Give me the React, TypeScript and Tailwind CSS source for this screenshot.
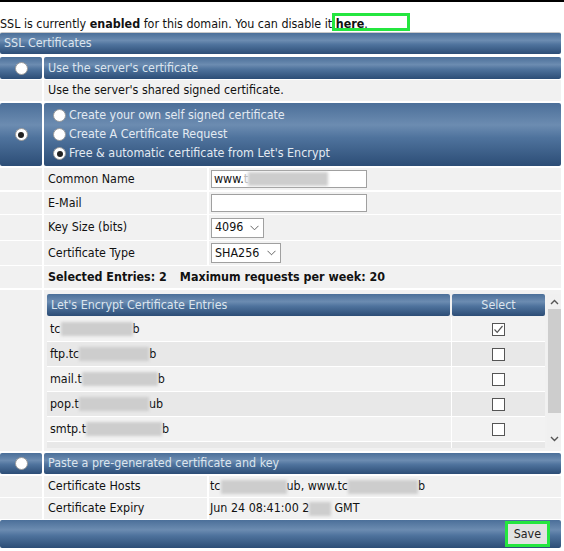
import React from "react";

const grad =
  "bg-[linear-gradient(to_bottom,#4b6f99_0%,#6c8cb1_35%,#4f739d_55%,#2c4d76_100%)]";

function Radio({ checked = false }: { checked?: boolean }) {
  return (
    <span className="inline-flex w-[13px] h-[13px] rounded-full bg-white border border-[#9a9a9a] items-center justify-center shrink-0">
      {checked && <span className="w-[6px] h-[6px] rounded-full bg-[#222]" />}
    </span>
  );
}

function Blur({ w }: { w: number }) {
  return (
    <span
      className="inline-block h-[14px] bg-[#cdcdcd] blur-[1.5px] align-middle"
      style={{ width: w }}
    />
  );
}

function Check({ checked = false }: { checked?: boolean }) {
  return (
    <span className="inline-flex w-[13px] h-[13px] bg-white border border-[#555] items-center justify-center">
      {checked && (
        <svg width="11" height="11" viewBox="0 0 11 11">
          <path d="M1.5 5.5 L4.2 8.3 L9.5 2" fill="none" stroke="#555" strokeWidth="1.2" />
        </svg>
      )}
    </span>
  );
}

function HeadRow({ children, checked }: { children: React.ReactNode; checked?: boolean }) {
  return (
    <div className="flex gap-[2px] h-[22px]">
      <div className={`w-[42px] ${grad} rounded-[2px] flex items-center justify-center`}>
        <Radio checked={checked} />
      </div>
      <div className={`flex-1 ${grad} rounded-[2px] flex items-center pl-[4px] text-[#dce5ee]`}>
        {children}
      </div>
    </div>
  );
}

function FormRow({
  label,
  children,
  h = 22,
  mt = 2,
  pl = 2,
}: {
  label: React.ReactNode;
  children?: React.ReactNode;
  h?: number;
  mt?: number;
  pl?: number;
}) {
  return (
    <div className="flex gap-[2px]" style={{ height: h, marginTop: mt }}>
      <div className="w-[42px] bg-[#f1f1f1]" />
      <div className="w-[163px] bg-[#f1f1f1] flex items-center pl-[4px]">{label}</div>
      <div className="flex-1 bg-[#f1f1f1] flex items-center" style={{ paddingLeft: pl }}>
        {children}
      </div>
    </div>
  );
}

function Select({ value, w }: { value: string; w: number }) {
  return (
    <div
      className="h-[20px] bg-white border border-[#a0a0a0] flex items-center justify-between pl-[3px] pr-[4px]"
      style={{ width: w }}
    >
      <span>{value}</span>
      <svg width="9" height="6" viewBox="0 0 9 6">
        <path d="M0.5 0.8 L4.5 4.8 L8.5 0.8" fill="none" stroke="#666" strokeWidth="1" />
      </svg>
    </div>
  );
}

const entries: { pre: string; blur: number; post: string; checked: boolean }[] = [
  { pre: "tc", blur: 72, post: "b", checked: true },
  { pre: "ftp.tc", blur: 70, post: "b", checked: false },
  { pre: "mail.t", blur: 76, post: "b", checked: false },
  { pre: "pop.t", blur: 70, post: "ub", checked: false },
  { pre: "smtp.t", blur: 76, post: "b", checked: false },
];

export default function App() {
  return (
    <div
      className="w-[564px] h-[551px] bg-white overflow-hidden text-[12.4px] text-[#111] leading-none relative"
      style={{ fontFamily: "'DejaVu Sans Condensed', 'DejaVu Sans', Tahoma, sans-serif" }}
    >
      <div className="h-[2px] bg-black" />
      <div className="h-[30px] flex items-end pb-[2px] relative">
        <span>
          SSL is currently <b>enabled</b> for this domain. You can disable it <b>here</b>.
        </span>
        <span className="absolute left-[332px] top-[11px] w-[78px] h-[18px] border-[3px] border-[#24e63f]" />
      </div>
      <div className="w-[561px] flex flex-col">
        <div className={`h-[22px] ${grad} rounded-[2px] flex items-center pl-[4px] text-[#dce5ee] border-t border-[#c8c8c8]`}>
          SSL Certificates
        </div>
        <div className="mt-[3px]">
          <HeadRow>Use the server's certificate</HeadRow>
        </div>
        <div className="flex gap-[2px] h-[21px] mt-[1px]">
          <div className="w-[42px] bg-[#f1f1f1]" />
          <div className="flex-1 bg-[#f1f1f1] flex items-center pl-[4px]">
            Use the server's shared signed certificate.
          </div>
        </div>
        <div className="flex gap-[2px] h-[63px] mt-[2px]">
          <div className={`w-[42px] ${grad} rounded-[2px] flex items-center justify-center`}>
            <Radio checked />
          </div>
          <div className={`flex-1 ${grad} rounded-[2px] flex flex-col justify-center gap-[6px] pl-[9px] text-[#e3eaf2]`}>
            <div className="flex items-center gap-[3px] h-[13px]">
              <Radio /> Create your own self signed certificate
            </div>
            <div className="flex items-center gap-[3px] h-[13px]">
              <Radio /> Create A Certificate Request
            </div>
            <div className="flex items-center gap-[3px] h-[13px]">
              <Radio checked /> Free &amp; automatic certificate from Let's Encrypt
            </div>
          </div>
        </div>
        <FormRow label="Common Name">
          <div className="w-[156px] h-[18px] bg-white border border-[#a0a0a0] flex items-center pl-[2px]">
            www.<span className="text-[#bbb]">t</span>
            <Blur w={80} />
          </div>
        </FormRow>
        <FormRow label="E-Mail">
          <div className="w-[156px] h-[18px] bg-white border border-[#a0a0a0]" />
        </FormRow>
        <FormRow label="Key Size (bits)" h={25} mt={1}>
          <Select value="4096" w={53} />
        </FormRow>
        <FormRow label="Certificate Type" h={24} mt={1}>
          <Select value="SHA256" w={70} />
        </FormRow>
        <div className="flex gap-[2px] h-[22px] mt-[1px]">
          <div className="w-[42px] bg-[#f1f1f1]" />
          <div className="flex-1 bg-[#f1f1f1] flex items-center pl-[4px] font-bold">
            <span>Selected Entries: 2</span>
            <span className="ml-[13px]">Maximum requests per week: 20</span>
          </div>
        </div>
        <div className="flex gap-[2px] h-[161px] mt-[2px]">
          <div className="w-[42px] bg-[#f1f1f1]" />
          <div className="flex-1 bg-[#f1f1f1] pl-[3px] pt-[4px] flex gap-[2px]">
            <div className="w-[498px] flex flex-col">
              <div className="flex gap-[2px] h-[22px]">
                <div className={`w-[403px] ${grad} rounded-[2px] flex items-center pl-[4px] text-[#dce5ee]`}>
                  Let's Encrypt Certificate Entries
                </div>
                <div className={`flex-1 ${grad} rounded-[2px] flex items-center justify-center text-[#dce5ee]`}>
                  Select
                </div>
              </div>
              <div className="flex flex-col gap-[1px] mt-[1px] bg-white overflow-hidden h-[131px]">
                {entries.map((e, i) => (
                  <div key={i} className="flex gap-[1px] h-[24px] shrink-0">
                    <div
                      className={`w-[404px] flex items-center pl-[3px] ${i % 2 ? "bg-[#e8e8e8]" : "bg-[#f2f2f2]"}`}
                    >
                      <span>{e.pre}</span>
                      <Blur w={e.blur} />
                      <span>{e.post}</span>
                    </div>
                    <div
                      className={`flex-1 flex items-center justify-center ${i % 2 ? "bg-[#e8e8e8]" : "bg-[#f2f2f2]"}`}
                    >
                      <Check checked={e.checked} />
                    </div>
                  </div>
                ))}
                <div className="flex gap-[1px] h-[10px] shrink-0">
                  <div className="w-[404px] bg-[#e8e8e8]" />
                  <div className="flex-1 bg-[#e8e8e8]" />
                </div>
              </div>
            </div>
            <div className="w-[14px] h-[153px] bg-[#f0f0f0] flex flex-col items-center">
              <svg width="9" height="14" viewBox="0 0 9 14" className="mt-[1px]">
                <path d="M1 9 L4.5 5.5 L8 9" fill="none" stroke="#555" strokeWidth="1.4" />
              </svg>
              <div className="w-[13px] h-[104px] bg-[#cdcdcd]" />
              <div className="flex-1" />
              <svg width="9" height="14" viewBox="0 0 9 14" className="mb-[1px]">
                <path d="M1 5 L4.5 8.5 L8 5" fill="none" stroke="#555" strokeWidth="1.4" />
              </svg>
            </div>
          </div>
        </div>
        <div className="mt-[2px]">
          <div className="flex gap-[2px] h-[21px]">
            <div className={`w-[42px] ${grad} rounded-[2px] flex items-center justify-center`}>
              <Radio />
            </div>
            <div className={`flex-1 ${grad} rounded-[2px] flex items-center pl-[4px] text-[#dce5ee]`}>
              Paste a pre-generated certificate and key
            </div>
          </div>
        </div>
        <FormRow label="Certificate Hosts" h={21} mt={2} pl={1}>
          <span>tc</span>
          <Blur w={66} />
          <span>ub, www.tc</span>
          <Blur w={70} />
          <span>b</span>
        </FormRow>
        <FormRow label="Certificate Expiry" h={21} mt={1} pl={1}>
          <span>Jun 24 08:41:00 2</span>
          <Blur w={22} />
          <span className="ml-[3px]">GMT</span>
        </FormRow>
        <div className={`h-[28px] mt-[1px] ${grad} rounded-[2px] flex items-center justify-end pr-[14px]`}>
          <div className="relative">
            <div className="h-[20px] px-[6px] bg-[#e2e2e2] flex items-center text-[#222]">Save</div>
            <span className="absolute left-[-3px] top-[-3px] right-[-3px] bottom-[-3px] border-[3px] border-[#24e63f]" />
          </div>
        </div>
      </div>
    </div>
  );
}
